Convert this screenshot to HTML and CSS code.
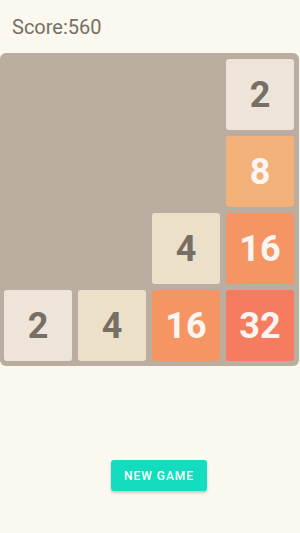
FILE: index.html
```html
<!DOCTYPE html>
<html>
  <head>
    <meta name="viewport" content="width=device-width, initial-scale=1.0">
    <title>2048</title>
    <link rel="stylesheet" href="styles.css">
  </head>
  <body>
    <p class="score">Score:560</p>

    <section class="board">
      <div class="cell"></div>
      <div class="cell"></div>
      <div class="cell"></div>
      <div class="tile t2">2</div>

      <div class="cell"></div>
      <div class="cell"></div>
      <div class="cell"></div>
      <div class="tile t8">8</div>

      <div class="cell"></div>
      <div class="cell"></div>
      <div class="tile t4">4</div>
      <div class="tile t16">16</div>

      <div class="tile t2">2</div>
      <div class="tile t4">4</div>
      <div class="tile t16">16</div>
      <div class="tile t32">32</div>
    </section>

    <div class="actions">
      <button>New Game</button>
    </div>
  </body>
</html>
```

FILE: styles.css
```css
body {
  font-family: Roboto, Arial, sans-serif;
  background-color: #faf8ef;
  margin: 0;
  padding: 0;
  width: 300px;
  height: 533px;
  overflow: hidden;
}
.score {
  margin: 0;
  padding: 15px 12px 0;
  height: 40px;
  box-sizing: border-box;
  font-size: 20px;
  color: #776e65;
}
.board {
  margin-top: 13px;
  width: 299px;
  box-sizing: border-box;
  padding: 6px 5px 5px 4px;
  background-color: #bbada0;
  border-radius: 6px;
  display: grid;
  grid-template-columns: repeat(4, 68px);
  grid-template-rows: repeat(4, 71px);
  gap: 6px;
}
.tile {
  border-radius: 3px;
  display: flex;
  align-items: center;
  justify-content: center;
  font-size: 36px;
  font-weight: bold;
  color: #776e65;
}
.t2 { background-color: #eee4da; }
.t4 { background-color: #ede0c8; }
.t8 { background-color: #f2b179; color: #f9f6f2; }
.t16 { background-color: #f59563; color: #f9f6f2; }
.t32 { background-color: #f67c5f; color: #f9f6f2; }
.actions {
  display: flex;
  justify-content: center;
  padding-top: 94px;
  padding-left: 18px;
}
button {
  width: 96px;
  height: 31px;
  padding: 0;
  border: none;
  border-radius: 3px;
  background-color: #14dcbe;
  color: white;
  font-family: Roboto, Arial, sans-serif;
  font-size: 12px;
  font-weight: 500;
  letter-spacing: 1px;
  text-transform: uppercase;
  box-shadow: 0 2px 3px rgba(0, 0, 0, 0.2);
  cursor: pointer;
}
```
